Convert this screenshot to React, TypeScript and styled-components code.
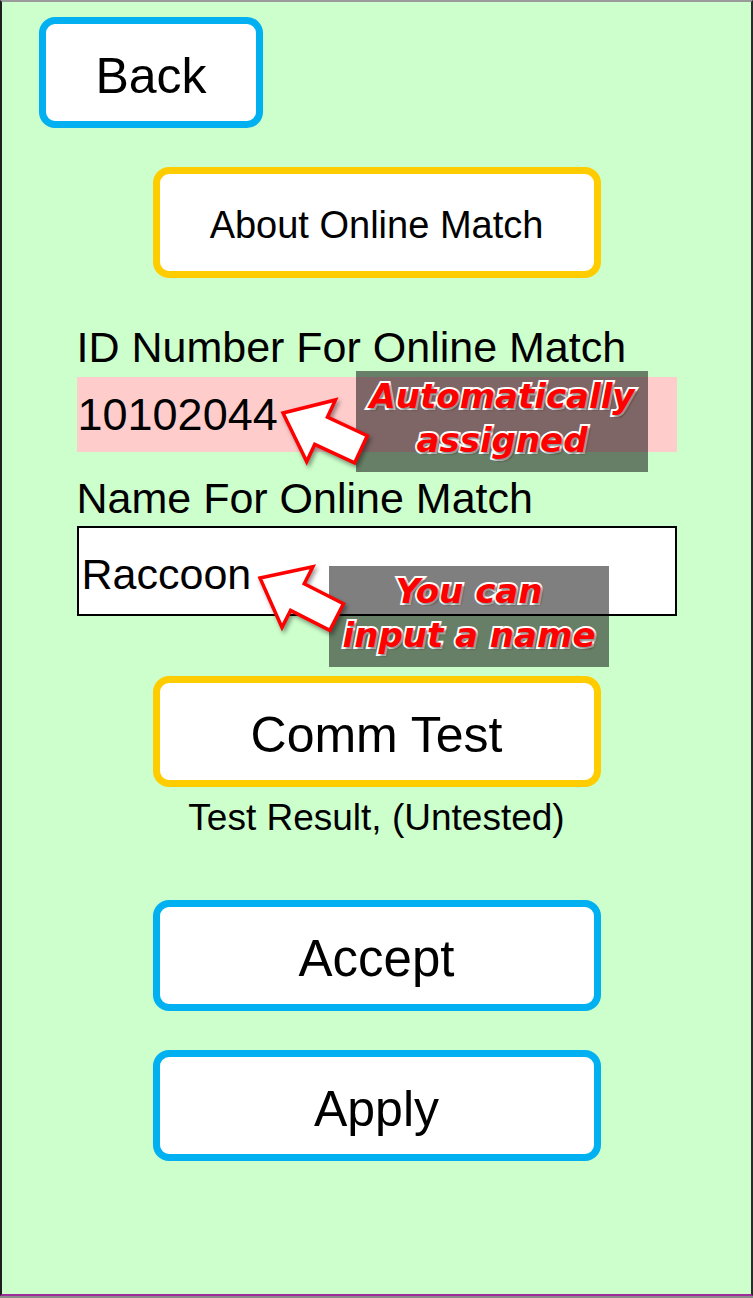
import React from 'react'
import styled, { createGlobalStyle } from 'styled-components'

const GlobalStyle = createGlobalStyle`
  html, body {
    margin: 0;
    padding: 0;
    background: #8a8a8a;
  }
  body {
    font-family: "Liberation Sans", Arial, sans-serif;
  }
`

// screen frame, offsets of overlays are measured from its padding box
const Screen = styled.div`
  position: relative;
  box-sizing: border-box;
  width: 753px;
  height: 1296px;
  background: #ccffcc;
  border-left: 2px solid #1f1f1f;
  border-right: 2px solid #2b2b2b;
  border-top: 2px solid #9a9a9a;
  border-bottom: 2px solid #a02c9c;
  display: flex;
  flex-direction: column;
  align-items: center;
  overflow: hidden;
`

const tones = {
  blue: '#00b0f0',
  yellow: '#ffcc00',
}

const RoundButton = styled.button<{
  $tone: keyof typeof tones
  $size: number
  $width: number
  $gap: number
}>`
  box-sizing: border-box;
  flex: none;
  width: ${(p) => p.$width}px;
  height: 111px;
  margin-top: ${(p) => p.$gap}px;
  border: 7px solid ${(p) => tones[p.$tone]};
  border-radius: 16px;
  background: #ffffff;
  color: #000000;
  font-family: "Liberation Sans", Arial, sans-serif;
  font-size: ${(p) => p.$size}px;
  padding: 6px 0 0;
  display: flex;
  align-items: center;
  justify-content: center;
  cursor: pointer;
`

const BackButton = styled(RoundButton)`
  align-self: flex-start;
  margin-left: 37px;
`

const Field = styled.div<{ $gap: number }>`
  width: 600px;
  margin-top: ${(p) => p.$gap}px;
  display: flex;
  flex-direction: column;
`

const FieldLabel = styled.div`
  height: 48px;
  line-height: 48px;
  font-size: 43px;
  color: #000;
  white-space: nowrap;
`

const IdValue = styled.div`
  margin-top: 6px;
  height: 75px;
  line-height: 75px;
  font-size: 45px;
  background: #ffcccc;
  padding-left: 1px;
`

const NameInput = styled.input`
  box-sizing: border-box;
  margin-top: 4px;
  width: 600px;
  height: 90px;
  border: 2px solid #000;
  border-radius: 0;
  background: #fff;
  padding: 6px 0 0 3px;
  font-family: "Liberation Sans", Arial, sans-serif;
  font-size: 43px;
  color: #000;
  outline: none;
`

const ResultText = styled.div`
  margin-top: 9px;
  height: 44px;
  line-height: 44px;
  font-size: 37px;
  color: #000;
`

// overlays: dimmed note boxes and block arrows
const Note = styled.div<{ $x: number; $y: number; $w: number }>`
  position: absolute;
  left: ${(p) => p.$x - 2}px;
  top: ${(p) => p.$y - 2}px;
  width: ${(p) => p.$w}px;
  height: 101px;
  box-sizing: border-box;
  padding-bottom: 7px;
  background: rgba(0, 0, 0, 0.5);
  display: flex;
  flex-direction: column;
  align-items: center;
  justify-content: center;
`

const NoteLine = styled.span`
  font-family: "DejaVu Sans", sans-serif;
  font-weight: bold;
  font-style: italic;
  font-size: 34px;
  line-height: 44px;
  color: #ff0000;
  -webkit-text-stroke: 4px #ffffff;
  paint-order: stroke fill;
  text-shadow: 2px 2px 2px rgba(0, 0, 0, 0.45);
  white-space: nowrap;
`

const ArrowSvg = styled.svg<{ $x: number; $y: number }>`
  position: absolute;
  left: ${(p) => p.$x - 12}px;
  top: ${(p) => p.$y - 32}px;
  overflow: visible;
  filter: drop-shadow(2px 3px 2px rgba(0, 0, 0, 0.4));
`

const PointerArrow: React.FC<{ x: number; y: number; angle: number }> = ({
  x,
  y,
  angle,
}) => (
  <ArrowSvg $x={x} $y={y} width="120" height="100" viewBox="0 0 120 100">
    <g transform={`translate(10 30) rotate(${angle})`}>
      <polygon
        points="0,0 42,-34 42,-15 86,-15 86,15 42,15 42,34"
        fill="#ffffff"
        stroke="#ff0000"
        strokeWidth="3.5"
        strokeLinejoin="miter"
      />
    </g>
  </ArrowSvg>
)

const App: React.FC = () => {
  return (
    <>
      <GlobalStyle />
      <Screen>
        <BackButton $tone="blue" $size={50} $width={224} $gap={15}>
          Back
        </BackButton>
        <RoundButton $tone="yellow" $size={38} $width={448} $gap={39}>
          About Online Match
        </RoundButton>

        <Field $gap={45}>
          <FieldLabel>ID Number For Online Match</FieldLabel>
          <IdValue>10102044</IdValue>
        </Field>

        <Field $gap={22}>
          <FieldLabel>Name For Online Match</FieldLabel>
          <NameInput defaultValue="Raccoon" />
        </Field>

        <RoundButton $tone="yellow" $size={50} $width={448} $gap={60}>
          Comm Test
        </RoundButton>
        <ResultText>Test Result, (Untested)</ResultText>

        <RoundButton $tone="blue" $size={51} $width={448} $gap={60}>
          Accept
        </RoundButton>
        <RoundButton $tone="blue" $size={50} $width={448} $gap={39}>
          Apply
        </RoundButton>

        <Note $x={356} $y={371} $w={292}>
          <NoteLine>Automatically</NoteLine>
          <NoteLine>assigned</NoteLine>
        </Note>
        <PointerArrow x={283} y={413} angle={25} />

        <Note $x={329} $y={566} $w={280}>
          <NoteLine>You can</NoteLine>
          <NoteLine>input a name</NoteLine>
        </Note>
        <PointerArrow x={260} y={578} angle={27} />
      </Screen>
    </>
  )
}

export default App
